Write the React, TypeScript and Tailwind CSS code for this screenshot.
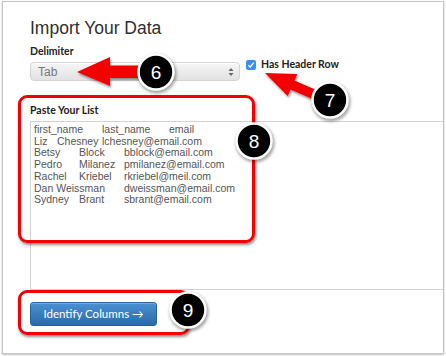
import React from "react";

const rows: string[][] = [
  ["first_name", "last_name", "email"],
  ["Liz", "Chesney", "lchesney@email.com"],
  ["Betsy", "Block", "bblock@email.com"],
  ["Pedro", "Milanez", "pmilanez@email.com"],
  ["Rachel", "Kriebel", "rkriebel@meil.com"],
  ["Dan Weissman", "", "dweissman@email.com"],
  ["Sydney", "Brant", "sbrant@email.com"],
];

const colW = (r: number, c: number) => {
  if (r === 0) return c === 0 ? 68 : 67;
  if (r === 1) return c === 0 ? 23 : 45;
  return 45;
};

function Badge({ cx, cy, n }: { cx: number; cy: number; n: string }) {
  return (
    <g>
      <circle cx={cx + 1} cy={cy + 2} r={19.5} fill="rgba(0,0,0,0.35)" filter="url(#blur)" />
      <circle cx={cx} cy={cy} r={17.5} fill="#000" stroke="#fff" strokeWidth={2.6} />
      <text
        x={cx}
        y={cy + 6.5}
        textAnchor="middle"
        fill="#fff"
        fontSize="19"
        fontFamily="'Liberation Sans', Arial, sans-serif"
      >
        {n}
      </text>
    </g>
  );
}

export default function App() {
  return (
    <div className="relative w-[446px] h-[356px] bg-white overflow-hidden" style={{ fontFamily: "Lato, 'Open Sans', sans-serif" }}>
      <div className="absolute left-[2px] top-[1px] w-[442px] h-[353px] border border-[#c4c4c4] shadow-[0_1px_2px_rgba(0,0,0,0.25)] bg-white">
        <div className="pl-[27px] pt-[15px] flex flex-col">
          <h1
            className="text-[17.5px] leading-[23px] font-normal text-[#2e2e2e]"
            style={{ fontFamily: "'Liberation Sans', Arial, sans-serif" }}
          >
            Import Your Data
          </h1>
          <div className="flex items-start mt-[5px]">
            <div className="flex flex-col w-[210px]">
              <div className="text-[10.5px] leading-[13px] font-bold text-[#222]">Delimiter</div>
              <div className="mt-[4px] h-[19px] rounded-[4px] border border-[#d4d4d4] bg-gradient-to-b from-[#f6f6f6] to-[#e2e2e2] flex items-center justify-between pl-[7px] pr-[5px] shadow-[inset_0_1px_0_#fff]">
                <span className="text-[12px] text-[#777]" style={{ fontFamily: "'Liberation Sans', Arial, sans-serif" }}>Tab</span>
                <svg width="6" height="10" viewBox="0 0 6 10">
                  <path d="M0.5 4 L3 1 L5.5 4 Z" fill="#666" />
                  <path d="M0.5 6 L3 9 L5.5 6 Z" fill="#666" />
                </svg>
              </div>
            </div>
            <div className="flex items-center ml-[6px] mt-[13px]">
              <div className="w-[10px] h-[10px] rounded-[2px] bg-[#3d8ef2] flex items-center justify-center">
                <svg width="8" height="8" viewBox="0 0 8 8">
                  <path d="M1.3 4.2 L3.2 6 L6.8 1.6" fill="none" stroke="#fff" strokeWidth="1.3" />
                </svg>
              </div>
              <span className="ml-[5px] text-[10.5px] leading-[13px] font-bold text-[#222]">Has Header Row</span>
            </div>
          </div>
          <div className="mt-[23px] text-[10.5px] leading-[13px] font-bold text-[#222]">Paste Your List</div>
          <div
            className="mt-[4px] h-[169px] border-l border-t border-b border-[#d2d2d2] pl-[3px] pt-[2px] text-[10.5px] leading-[11.7px] text-[#555]"
            style={{ fontFamily: "'Liberation Sans', Arial, sans-serif" }}
          >
            {rows.map((r, i) => (
              <div key={i} className="flex whitespace-pre">
                {r.map((c, j) => (
                  <span key={j} className="shrink-0" style={j < 2 ? { width: colW(i, j) } : undefined}>
                    {c}
                  </span>
                ))}
              </div>
            ))}
          </div>
          <div className="mt-[12px]">
            <button className="w-[127px] h-[24px] rounded-[3px] bg-gradient-to-b from-[#4a91d2] to-[#2b6aa9] border border-[#2a62a0] text-white text-[11.5px] flex items-center justify-center shadow-[inset_0_1px_0_rgba(255,255,255,0.25)]">
              Identify Columns →
            </button>
          </div>
        </div>
      </div>

      {/* red annotation boxes */}
      <div className="absolute left-[18px] top-[95px] w-[237px] h-[148px] rounded-[9px] border-[3.5px] border-[#f40000] shadow-[1px_2px_3px_rgba(0,0,0,0.45)]" />
      <div className="absolute left-[18px] top-[290px] w-[172px] h-[45px] rounded-[9px] border-[3.5px] border-[#f40000] shadow-[1px_2px_3px_rgba(0,0,0,0.45)]" />

      <svg className="absolute left-0 top-0" width="446" height="356" viewBox="0 0 446 356">
        <defs>
          <filter id="blur" x="-50%" y="-50%" width="200%" height="200%">
            <feGaussianBlur stdDeviation="1.5" />
          </filter>
          <filter id="ashadow" x="-20%" y="-50%" width="140%" height="200%">
            <feDropShadow dx="1" dy="2" stdDeviation="1.2" floodColor="#000" floodOpacity="0.4" />
          </filter>
        </defs>
        <polygon
          points="77,72 110,57 110,65.5 148,65.5 148,78 110,78 110,86"
          fill="#f40000"
          filter="url(#ashadow)"
        />
        <polygon
          points="265,73 297.3,74 294.5,80.4 326.6,94.4 322.6,103.6 290.5,89.6 287.7,96"
          fill="#f40000"
          filter="url(#ashadow)"
        />
        <Badge cx={156} cy={72} n="6" />
        <Badge cx={330} cy={100} n="7" />
        <Badge cx={254} cy={141} n="8" />
        <Badge cx={188} cy={310} n="9" />
      </svg>
    </div>
  );
}
